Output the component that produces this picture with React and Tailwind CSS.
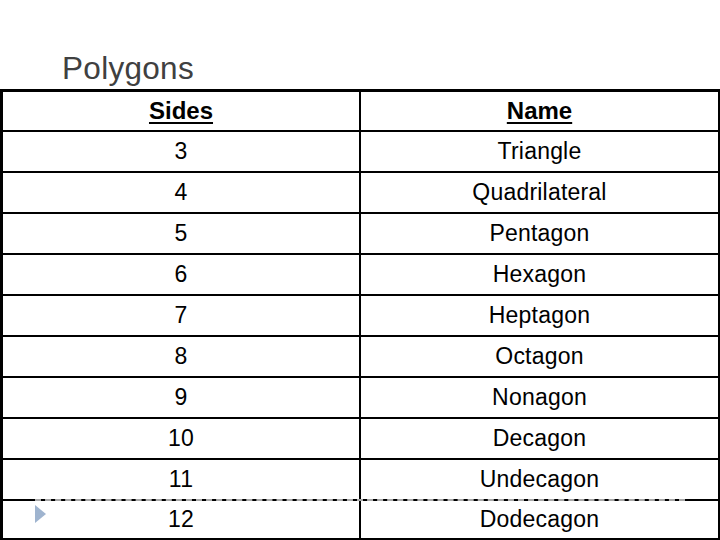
import React from "react";

const rows = [
  ["3", "Triangle"],
  ["4", "Quadrilateral"],
  ["5", "Pentagon"],
  ["6", "Hexagon"],
  ["7", "Heptagon"],
  ["8", "Octagon"],
  ["9", "Nonagon"],
  ["10", "Decagon"],
  ["11", "Undecagon"],
  ["12", "Dodecagon"],
];

export default function App() {
  return (
    <div
      className="relative w-[720px] h-[540px] bg-white overflow-hidden"
      style={{ fontFamily: '"Liberation Sans", Arial, sans-serif' }}
    >
      <div className="h-[89px] pl-[62px] pt-[53px]">
        <div className="text-[31.5px] leading-none tracking-[0.3px] text-[#404040]">Polygons</div>
      </div>
      <div className="w-[720px] border-t-[3px] border-l-[3px] border-r-2 border-b-2 border-black text-black">
        <div className="grid grid-cols-[356px_1fr] h-[38px]">
          <div className="flex items-center justify-center text-[24px] font-bold underline underline-offset-[3px] decoration-2">
            Sides
          </div>
          <div className="flex items-center justify-center border-l-2 border-black text-[24px] font-bold underline underline-offset-[3px] decoration-2">
            Name
          </div>
        </div>
        {rows.map(([s, n], i) => (
          <div
            key={s}
            className={
              "grid grid-cols-[356px_1fr] border-t-2 border-black " +
              (i === rows.length - 1 ? "h-[39px]" : "h-[41px]")
            }
          >
            <div className="flex items-center justify-center text-[23px] tracking-[0.2px]">{s}</div>
            <div className="flex items-center justify-center border-l-2 border-black text-[23px] tracking-[0.2px]">
              {n}
            </div>
          </div>
        ))}
      </div>
      <div className="absolute left-[35px] top-[499px] w-[650px] border-t-2 border-dashed border-[#a8a8a8]" />
      <svg
        className="absolute left-[35px] top-[505px]"
        width="12"
        height="18"
        viewBox="0 0 12 18"
      >
        <polygon points="0,0 11,9 0,18" fill="#9fb4cf" />
      </svg>
    </div>
  );
}
